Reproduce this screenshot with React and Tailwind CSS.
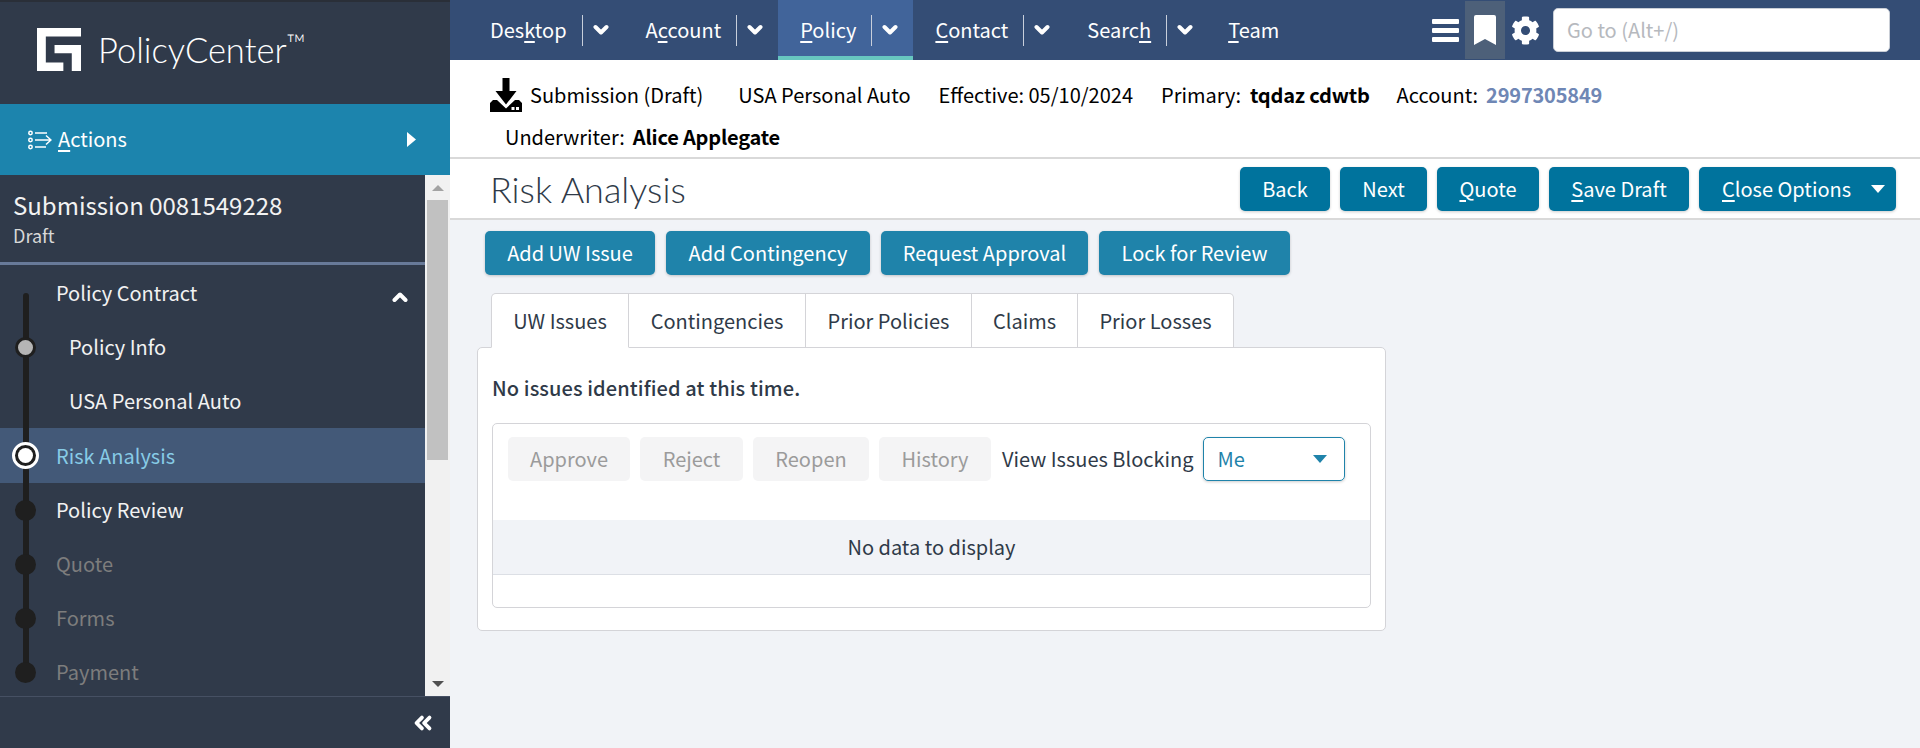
import { ChevronsLeft } from 'lucide-react';

const font = 'font-["Noto_Sans_CJK_SC","Liberation_Sans",sans-serif]';

const Accel = ({ pre, u, post }) => (
  <span>{pre}<u className="underline-offset-[3px]">{u}</u>{post}</span>
);

const Chevron = ({ dir, className }) => (
  <svg className={className} width="16" height="12" viewBox="0 0 16 12" fill="none" stroke="white" strokeWidth="4" strokeLinecap="round" strokeLinejoin="round">
    <path d={dir === 'up' ? 'M2.500 9L8 3.500l5.500 5.500' : 'M2.500 3L8 8.500 13.500 3'} />
  </svg>
);

const NavItem = ({ pre, u, post, menu, active, className = '' }) => (
  <div className={`flex items-center h-[60px] pl-[22px] shrink-0 ${active ? 'bg-[#41649a] border-b-4 border-[#67c7c0] pt-[4px]' : ''} ${menu ? 'pr-[5px]' : ''} ${className}`}>
    <div className="text-white whitespace-nowrap"><Accel pre={pre} u={u} post={post} /></div>
    {menu && (
      <div className="flex items-center ml-[15px]">
        <div className="w-px h-[31px] bg-[#c8cfdb]" />
        <div className="w-[36px] flex justify-center"><Chevron /></div>
      </div>
    )}
  </div>
);

const Primary = ({ children, className }) => (
  <button className={`h-[44px] rounded-[5px] bg-[#00739d] text-white text-[20px] shadow-[0_1px_3px_rgba(0,0,0,0.2)] flex items-center justify-center ${className}`}>
    {children}
  </button>
);

const Secondary = ({ children, className }) => (
  <button className={`h-[44px] rounded-[5px] bg-[#1f83aa] text-white text-[20px] shadow-[0_1px_3px_rgba(0,0,0,0.2)] flex items-center justify-center ${className}`}>
    {children}
  </button>
);

const Disabled = ({ children, className }) => (
  <button className={`h-[44px] pb-px rounded-[5px] bg-[#f4f4f5] text-[#9b9b9b] text-[20px] flex items-center justify-center ${className}`}>
    {children}
  </button>
);

const Tab = ({ children, className }) => (
  <div className={`h-[55px] flex items-center justify-center border-t border-r border-b border-[#d4d4d8] bg-white text-[#2f3a48] text-[20px] ${className}`}>
    {children}
  </div>
);

const Step = ({ label, dot, text, indent, active }) => (
  <div className={`flex items-center relative ${active ? 'h-[55px] bg-[#435978]' : 'h-[54px]'}`}>
    {dot === 'ring' && <div className="absolute left-[12px] z-20 w-[27px] h-[27px] rounded-full bg-[#1f1f1f] border-[3px] border-white flex items-center justify-center"><div className="w-[15px] h-[15px] rounded-full bg-white" /></div>}
    {dot === 'grey' && <div className="absolute left-[15px] z-20 w-[21px] h-[21px] rounded-full bg-[#b5b5b5] border-[3px] border-[#1f1f1f]" />}
    {dot === 'dark' && <div className="absolute left-[15px] z-20 w-[21px] h-[21px] rounded-full bg-[#1f1f1f]" />}
    <span className={`${indent ? 'ml-[69px]' : 'ml-[56px]'} ${text}`}>{label}</span>
  </div>
);

const ActionsIcon = () => (
  <svg width="24" height="20" viewBox="0 0 24 20" fill="none" stroke="white" strokeWidth="1.5">
    <circle cx="2.500" cy="3" r="1.700" />
    <circle cx="2.500" cy="10" r="1.700" />
    <circle cx="2.500" cy="17" r="1.700" />
    <path d="M7 3h12M7 10h16M7 17h11M18 5.500l5 4.500-5 4.500" />
  </svg>
);

const Logo = () => (
  <svg width="44" height="43" viewBox="0 0 43.400 42.400" fill="white">
    <path d="M0 0H43.400V8.300H8.700V34H26V42.400H0Z" />
    <path d="M17.300 16.700H43.400V42.400H34.300V25H17.300Z" />
  </svg>
);

const SubmissionIcon = () => (
  <svg width="32" height="34" viewBox="0 0 32 34" fill="black">
    <path d="M12.500 0h7v13h7L16 26.500 5.500 13h7z" />
    <path d="M0 25l3-3h4l9 8.500L25 22h4l3 3v9H0zM21.500 29v3h3v-3zM26 29v3h3v-3z" fillRule="evenodd" />
  </svg>
);

const Gear = () => (
  <svg width="29" height="29" viewBox="0 0 512 512" fill="white">
    <path d="M487.400 315.700l-42.600-24.600c4.300-23.200 4.300-47 0-70.200l42.600-24.600c4.900-2.800 7.100-8.600 5.500-14-11.100-35.600-30-67.800-54.700-94.600-3.800-4.100-10-5.100-14.800-2.300L380.800 110c-17.900-15.400-38.500-27.300-60.800-35.100V25.800c0-5.600-3.900-10.500-9.400-11.700-36.700-8.200-74.300-7.800-109.200 0-5.500 1.200-9.400 6.100-9.400 11.700V75c-22.200 7.900-42.800 19.800-60.800 35.100L88.700 85.500c-4.900-2.800-11-1.900-14.800 2.300-24.700 26.700-43.600 58.900-54.700 94.600-1.700 5.400.6 11.200 5.500 14L67.300 221c-4.300 23.200-4.300 47 0 70.200l-42.600 24.600c-4.900 2.800-7.100 8.600-5.500 14 11.100 35.600 30 67.800 54.700 94.600 3.800 4.100 10 5.100 14.800 2.300l42.600-24.600c17.900 15.400 38.500 27.300 60.800 35.100v49.200c0 5.600 3.900 10.500 9.400 11.700 36.700 8.200 74.300 7.800 109.200 0 5.500-1.200 9.400-6.100 9.400-11.700v-49.200c22.200-7.900 42.800-19.800 60.800-35.100l42.600 24.600c4.900 2.800 11 1.900 14.800-2.300 24.700-26.700 43.600-58.900 54.700-94.600 1.500-5.500-.7-11.300-5.600-14.100zM256 336c-44.100 0-80-35.900-80-80s35.900-80 80-80 80 35.900 80 80-35.900 80-80 80z" />
  </svg>
);

export default function App() {
  return (
    <div className={`flex w-full h-[748px] overflow-hidden bg-[#f1f3f7] text-[20px] ${font}`}>
      {/* left rail */}
      <aside className="w-[450px] shrink-0 flex flex-col bg-[#303a4a]">
        <div className="h-[104px] flex items-start pl-[37px] pt-[26px] gap-[17px] shrink-0 border-t-2 border-[#2a2f38]">
          <Logo />
          <div className='text-white text-[34.500px] font-["Lato"] font-light leading-[44px] whitespace-nowrap'>
            PolicyCenter<sup className="text-[26px] top-[-10px] relative align-baseline">™</sup>
          </div>
        </div>
        <div className="h-[71px] shrink-0 bg-[#1c84ad] flex items-center pl-[28px] pr-[34px] text-white">
          <ActionsIcon />
          <span className="ml-[6px] -mt-[2px]"><Accel pre="" u="A" post="ctions" /></span>
          <svg className="ml-auto" width="9" height="15" viewBox="0 0 9 15" fill="white"><path d="M0 0l9 7.500-9 7.500z" /></svg>
        </div>

        <div className="flex flex-1 min-h-0">
          <div className="w-[425px] relative">
            <div className="h-[90px] pl-[13px] pt-[13px] border-b-[3px] border-[#687a99]">
              <div className="text-[24px] leading-[34px] text-[#f2f2f2]">Submission 0081549228</div>
              <div className="text-[18px] leading-[24px] mt-px text-[#d8d8d8]">Draft</div>
            </div>
            <div className="relative pt-px">
              <div className="absolute left-[23px] top-[28px] bottom-[24px] w-[6px] rounded-full bg-[#1f1f1f] z-10" />
              <div className="h-[54px] flex items-center pl-[56px] pr-[17px] text-[#f2f2f2]">
                <span>Policy Contract</span>
                <Chevron dir="up" className="ml-auto mt-[8px]" />
              </div>
              <Step label="Policy Info" dot="grey" indent text="text-[#f2f2f2]" />
              <Step label="USA Personal Auto" indent text="text-[#f2f2f2]" />
              <Step label="Risk Analysis" dot="ring" active text="text-[#87cbe6]" />
              <Step label="Policy Review" dot="dark" text="text-[#f2f2f2]" />
              <Step label="Quote" dot="dark" text="text-[#7d7d7d]" />
              <Step label="Forms" dot="dark" text="text-[#7d7d7d]" />
              <Step label="Payment" dot="dark" text="text-[#7d7d7d]" />
            </div>
          </div>
          {/* fake scrollbar */}
          <div className="w-[25px] bg-[#f1f1f1] flex flex-col items-center relative">
            <div className="h-[25px] flex items-center justify-center"><div className="w-0 h-0 border-x-[6px] border-x-transparent border-b-[6px] border-b-[#a3a3a3]" /></div>
            <div className="w-[21px] h-[260px] bg-[#c1c1c1]" />
            <div className="mt-auto h-[25px] flex items-center justify-center"><div className="w-0 h-0 border-x-[6px] border-x-transparent border-t-[6px] border-t-[#505050]" /></div>
          </div>
        </div>

        <div className="h-[52px] shrink-0 border-t border-[#465063] flex items-center justify-end pr-[14px]">
          <ChevronsLeft className="w-[26px] h-[26px] text-white" strokeWidth={3.5} />
        </div>
      </aside>

      <main className="flex-1 min-w-0 flex flex-col">
        {/* top nav */}
        <nav className="h-[60px] shrink-0 bg-[#344d75] flex items-center pl-[18px] pr-[30px] text-[20px]">
          <NavItem pre="Des" u="k" post="top" menu />
          <NavItem pre="A" u="c" post="count" menu />
          <NavItem pre="" u="P" post="olicy" menu active />
          <NavItem pre="" u="C" post="ontact" menu />
          <NavItem pre="Searc" u="h" post="" menu />
          <NavItem pre="" u="T" post="eam" className="-ml-[2px]" />
          <div className="ml-auto flex items-center">
            <div className="w-[27px] flex flex-col gap-[4px] mr-[6px]">
              <div className="h-[5px] rounded-[1px] bg-white" />
              <div className="h-[5px] rounded-[1px] bg-white" />
              <div className="h-[5px] rounded-[1px] bg-white" />
            </div>
            <div className="w-[40px] h-[58px] bg-[#4d6079] flex items-center justify-center">
              <svg width="22" height="30" viewBox="0 0 22 30" fill="white"><path d="M2 0h18a2 2 0 012 2v28l-11-6-11 6V2a2 2 0 012-2z" /></svg>
            </div>
            <div className="w-[40px] flex justify-center mr-[8px]"><Gear /></div>
            <div className="w-[337px] h-[44px] bg-white rounded-[5px] border border-[#c9ced6] flex items-center pl-[13px] text-[#b6b9be]">Go to (Alt+/)</div>
          </div>
        </nav>

        {/* info bar */}
        <div className="h-[99px] shrink-0 bg-white border-b-2 border-[#d9d9d9] text-black">
          <div className="h-[62px] flex items-center pl-[40px] pt-[8px]">
            <SubmissionIcon />
            <span className="ml-[8px]">Submission (Draft)</span>
            <span className="ml-[35px]">USA Personal Auto</span>
            <span className="ml-[28px]">Effective: 05/10/2024</span>
            <span className="ml-[28px]">Primary:</span>
            <span className="ml-[9px] font-bold tracking-[-0.2px]">tqdaz cdwtb</span>
            <span className="ml-[27px]">Account:</span>
            <span className="ml-[8px] font-bold tracking-[-0.2px] text-[#6f87b5]">2997305849</span>
          </div>
          <div className="flex items-center pl-[55px]">
            <span>Underwriter:</span>
            <span className="ml-[8px] font-bold tracking-[-0.2px]">Alice Applegate</span>
          </div>
        </div>

        {/* title bar */}
        <div className="h-[61px] shrink-0 bg-white border-b-2 border-[#d9d9d9] flex items-center pl-[40px] pr-[24px]">
          <h1 className='text-[36px] font-["Lato"] font-light text-[#2f3a48]'>Risk Analysis</h1>
          <div className="ml-auto flex gap-[10px]">
            <Primary className="w-[90px]">Back</Primary>
            <Primary className="w-[87px]">Next</Primary>
            <Primary className="w-[102px]"><Accel pre="" u="Q" post="uote" /></Primary>
            <Primary className="w-[140px]"><Accel pre="" u="S" post="ave Draft" /></Primary>
            <Primary className="w-[197px] pl-[23px] pr-[11px] !justify-between">
              <Accel pre="" u="C" post="lose Options" />
              <span className="w-0 h-0 border-x-[7px] border-x-transparent border-t-[8px] border-t-white" />
            </Primary>
          </div>
        </div>

        {/* page body */}
        <div className="flex-1 pl-[27px]">
          <div className="flex gap-[11px] pl-[8px] pt-[11px]">
            <Secondary className="w-[170px]">Add UW Issue</Secondary>
            <Secondary className="w-[204px]">Add Contingency</Secondary>
            <Secondary className="w-[207px]">Request Approval</Secondary>
            <Secondary className="w-[191px]">Lock for Review</Secondary>
          </div>
          <div className="flex pl-[14px] mt-[18px]">
            <Tab className="w-[138px] border-l rounded-tl-[5px] !border-b-white relative z-10">UW Issues</Tab>
            <Tab className="w-[177px]">Contingencies</Tab>
            <Tab className="w-[166px]">Prior Policies</Tab>
            <Tab className="w-[106px]">Claims</Tab>
            <Tab className="w-[156px] rounded-tr-[5px]">Prior Losses</Tab>
          </div>
          <div className="w-[909px] h-[284px] -mt-px bg-white border border-[#d4d4d8] rounded-[5px] px-[14px]">
            <div className="h-[75px] pt-[4px] flex items-center font-medium tracking-[0.1px] text-[#2f3a48]">No issues identified at this time.</div>
            <div className="h-[185px] border border-[#d4d4d8] rounded-[5px] flex flex-col">
              <div className="flex items-center gap-[10px] pl-[15px] pt-[13px]">
                <Disabled className="w-[122px]">Approve</Disabled>
                <Disabled className="w-[103px]">Reject</Disabled>
                <Disabled className="w-[116px]">Reopen</Disabled>
                <Disabled className="w-[112px]">History</Disabled>
                <span className="text-[#2f3a48] ml-px">View Issues Blocking</span>
                <div className="w-[142px] h-[44px] -ml-[1px] rounded-[5px] border border-[#1f83aa] shadow-[0_1px_3px_rgba(0,0,0,0.2)] flex items-center justify-between pl-[14px] pr-[17px] text-[#1f83aa]">
                  Me
                  <span className="w-0 h-0 border-x-[7px] border-x-transparent border-t-[8px] border-t-[#1f83aa]" />
                </div>
              </div>
              <div className="h-[55px] mt-[39px] bg-[#f1f3f7] border-b border-[#dcdfe5] flex items-center justify-center text-[#2f3a48]">No data to display</div>
            </div>
          </div>
        </div>
      </main>
    </div>
  );
}
